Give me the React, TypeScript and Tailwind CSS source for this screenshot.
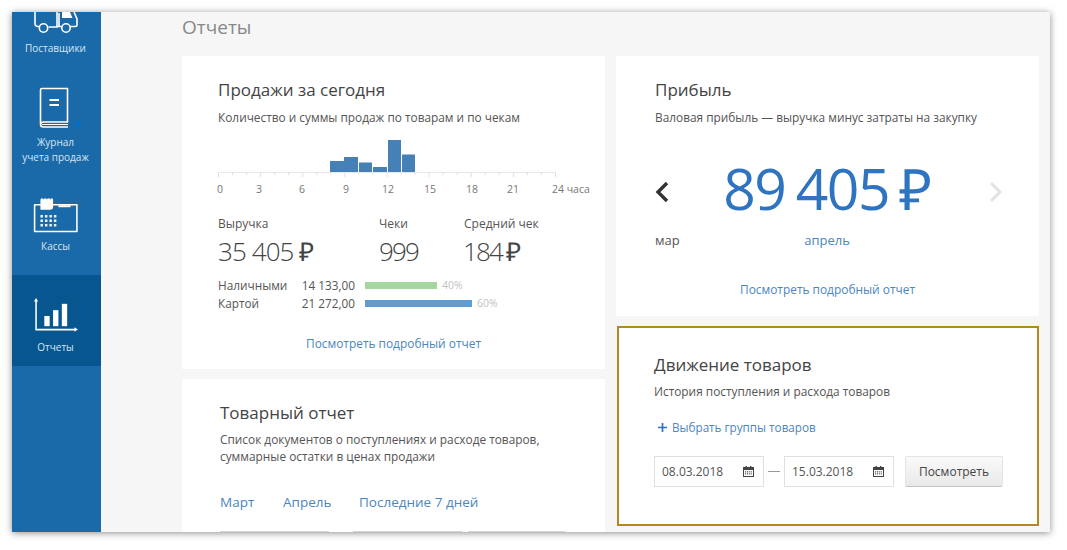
import React from "react";

const Truck = () => (
  <svg width="46" height="23" viewBox="0 0 46 23" fill="none" stroke="white" strokeWidth="1.6" className="block">
    <path d="M2 0V11.5Q2 14.5 5 14.5H6" />
    <path d="M15.5 15H24V0" />
    <path d="M26 15V1" />
    <circle cx="10.5" cy="16" r="4.2" />
    <circle cx="33" cy="16" r="4.2" />
    <path d="M24 14.5H28.5M37.5 14.5H42.5Q44 14.5 44 13V7L41 0" />
    <path d="M29 0H37L39.5 6H29Z" fill="white" stroke="none" />
  </svg>
);
const Book = () => (
  <svg width="32" height="42" viewBox="0 0 32 42" fill="none" stroke="white" strokeWidth="1.6" className="mr-[3px] block">
    <path d="M2.5 36V3Q2.5 1.5 4 1.5H29.5V35H5.5Q2.5 35 2.5 37.5Q2.5 40 5.5 40H30" />
    <path d="M11.5 13H21" strokeWidth="2" />
    <path d="M11.5 18H21" strokeWidth="2" />
    <path d="M4 37.5H30" strokeWidth="1" />
  </svg>
);
const Register = () => (
  <svg width="46" height="36" viewBox="0 0 46 37" fill="none" className="block">
    <path d="M1 8H44.5V35.5H1Z" stroke="white" strokeWidth="1.6" strokeLinejoin="round" />
    <path d="M7 2.5Q8.5 0 10.2 2.5Q11.9 0 13.6 2.5Q15.3 0 17 2.5Q18.7 0 20 2.5V10.5Q20 13 17 13H7Z" fill="white" />
    <path d="M25.5 9.5H38" stroke="white" strokeWidth="2" />
    {[0, 1, 2, 3].map((c) =>
      [0, 1, 2].map((r) => <rect key={c + "-" + r} x={7 + c * 4.6} y={18.5 + r * 4.6} width="2.6" height="2.6" fill="#e8f1f8" />)
    )}
  </svg>
);
const Bars = () => (
  <svg width="45" height="35" viewBox="0 0 46 36" fill="none" className="block">
    <path d="M3 2V32.5H43" stroke="white" strokeWidth="1.6" />
    <path d="M3 0L0.8 3.5H5.2Z" fill="white" />
    <path d="M46 32.5L42.5 30.2V34.8Z" fill="white" />
    <rect x="11.5" y="18.5" width="5.5" height="10.5" fill="white" />
    <rect x="20.5" y="12.5" width="5.5" height="16.5" fill="white" />
    <rect x="29.5" y="6" width="5.5" height="23" fill="white" />
  </svg>
);
const Cal = () => (
  <svg width="11" height="11" viewBox="0 0 11 11" className="block shrink-0">
    <rect x="0.5" y="1.5" width="10" height="9" fill="none" stroke="#444" />
    <rect x="0.5" y="1.5" width="10" height="2.5" fill="#444" />
    <rect x="2.5" y="0" width="1.4" height="2.5" fill="#444" />
    <rect x="7" y="0" width="1.4" height="2.5" fill="#444" />
    {[0, 1, 2, 3].map((c) =>
      [0, 1].map((r) => <rect key={c + "-" + r} x={2 + c * 1.9} y={5.3 + r * 2} width="1.1" height="1.1" fill="#444" />)
    )}
  </svg>
);

const bars: [number, number, number][] = [
  [112, 14, 11],
  [126, 14, 15],
  [141, 13, 9.5],
  [155, 14, 5],
  [170, 13, 32],
  [184, 13, 17.5],
];

const Chart = () => (
  <svg width="340" height="40" viewBox="0 0 340 40" className="block">
    {bars.map(([x, w, h]) => (
      <rect key={x} x={x} y={34 - h} width={w} height={h} fill="#4580b6" />
    ))}
    <path d="M0.5 34.5H338" stroke="#e6e9eb" strokeWidth="1" />
    {Array.from({ length: 25 }, (_, i) => (
      <path key={i} d={`M${0.5 + i * 14.04} 34.5V${i % 3 === 0 ? 39 : 37}`} stroke="#dde0e3" strokeWidth="1" />
    ))}
  </svg>
);

const ticks: [string, string][] = [
  ["0", "w-[42px]"],
  ["3", "w-[36px]"],
  ["6", "w-[50px]"],
  ["9", "w-[38px]"],
  ["12", "w-[46px]"],
  ["15", "w-[38px]"],
  ["18", "w-[46px]"],
  ["21", "w-[36px]"],
];

const Side = ({ icon, label, active }: { icon: React.ReactNode; label: React.ReactNode; active?: boolean }) => (
  <div className={active ? "flex h-[91px] flex-col items-center bg-[#07568f] pr-[2px] pt-[23px]" : "flex flex-col items-center pr-[2px]"}>
    {icon}
    <div className={(active ? "mt-[7px]" : "mt-[6px]") + " text-center text-[10px] leading-[15px] text-[#d6e6f3]"}>{label}</div>
  </div>
);

const link = "text-[11.9px] leading-[16px] text-[#4a86c2] text-center";
const title = "text-[17px] leading-[20px] text-[#444]";
const sub = "text-[11.85px] leading-[17px] text-[#555]";
const big = "mt-[4px] text-[26px] font-light leading-[30px] text-[#444] whitespace-nowrap";

export default function App() {
  return (
    <div className="h-[550px] w-[1067px] overflow-hidden bg-white p-3 font-['Open_Sans',sans-serif]">
      <div className="flex h-[520px] w-[1038px] overflow-hidden bg-[#f6f6f6] shadow-[0_1px_7px_rgba(0,0,0,0.45)]">
        <div className="flex w-[89px] shrink-0 flex-col bg-[#1a69a9]">
          <div className="flex flex-col items-center pr-[2px]">
            <Truck />
            <div className="mt-[6px] text-[10px] leading-[15px] text-[#d6e6f3]">Поставщики</div>
          </div>
          <div className="mt-[31px]">
            <Side icon={<Book />} label={<>Журнал<br />учета продаж</>} />
          </div>
          <div className="mt-[32px]">
            <Side icon={<Register />} label="Кассы" />
          </div>
          <div className="mt-[21px]">
            <Side active icon={<Bars />} label="Отчеты" />
          </div>
        </div>
        <div className="flex-1 pl-[81px]">
          <div className="h-[44px] pt-[1px] text-[19px] leading-[28px] text-[#888]">Отчеты</div>
          <div className="flex gap-[11px]">
            <div className="flex w-[423px] flex-col gap-[10px]">
              <div className="h-[313px] bg-white pl-[36px] pt-[24px]">
                <div className={title}>Продажи за сегодня</div>
                <div className={"mt-[9px] " + sub}>Количество и суммы продаж по товарам и по чекам</div>
                <div className="mt-[12px]"><Chart /></div>
                <div className="-ml-[19px] mt-[4px] flex text-[10.5px] leading-[14px] text-[#777]">
                  {ticks.map(([t, w]) => (
                    <div key={t} className={w + " text-center"}>{t}</div>
                  ))}
                  <div className="whitespace-nowrap pl-[21px]">24 часа</div>
                </div>
                <div className="mt-[20px] flex text-[#555]">
                  <div className="w-[161px]">
                    <div className="text-[12px] leading-[16px]">Выручка</div>
                    <div className={big + " tracking-[-0.9px]"}>35 405 ₽</div>
                  </div>
                  <div className="w-[85px]">
                    <div className="text-[12px] leading-[16px]">Чеки</div>
                    <div className={big + " tracking-[-1.8px]"}>999</div>
                  </div>
                  <div>
                    <div className="text-[12px] leading-[16px]">Средний чек</div>
                    <div className={"-ml-[1px] tracking-[-1.8px] [word-spacing:-1px] " + big}>184 ₽</div>
                  </div>
                </div>
                <div className="mt-[10px] text-[11.8px] leading-[18px] text-[#555]">
                  <div className="flex items-center">
                    <div className="w-[80px]">Наличными</div>
                    <div className="w-[57px] whitespace-nowrap text-right">14 133,00</div>
                    <div className="ml-[10px] h-[7px] w-[72px] bg-[#a5d6a0]" />
                    <div className="ml-[5px] text-[10.5px] text-[#c2c2c2]">40%</div>
                  </div>
                  <div className="flex items-center">
                    <div className="w-[80px]">Картой</div>
                    <div className="w-[57px] whitespace-nowrap text-right">21 272,00</div>
                    <div className="ml-[10px] h-[7px] w-[107px] bg-[#609cd0]" />
                    <div className="ml-[5px] text-[10.5px] text-[#c2c2c2]">60%</div>
                  </div>
                </div>
                <div className={"-ml-[36px] mt-[23px] " + link}>Посмотреть подробный отчет</div>
              </div>
              <div className="h-[160px] bg-white pl-[38px] pt-[24px]">
                <div className={title}>Товарный отчет</div>
                <div className={"mt-[8px] " + sub}>
                  Список документов о поступлениях и расходе товаров,<br />суммарные остатки в ценах продажи
                </div>
                <div className="mt-[27px] flex text-[13.5px] leading-[20px] text-[#4a86c2]">
                  <div className="w-[63px]">Март</div>
                  <div className="w-[76px]">Апрель</div>
                  <div>Последние 7 дней</div>
                </div>
                <div className="mt-[19px] flex">
                  <div className="h-[1px] w-[109px] bg-[#d4d4d4]" />
                  <div className="ml-[24px] h-[1px] w-[109px] bg-[#d4d4d4]" />
                  <div className="ml-[6px] h-[1px] w-[97px] bg-[#d4d4d4]" />
                </div>
              </div>
            </div>
            <div className="flex w-[423px] flex-col gap-[10px]">
              <div className="flex h-[260px] flex-col bg-white pl-[39px] pt-[24px]">
                <div className={title}>Прибыль</div>
                <div className={"mt-[9px] " + sub}>Валовая прибыль — выручка минус затраты на закупку</div>
                <div className="mt-[20px] flex h-[84px] items-center pr-[36px]">
                  <svg width="14" height="22" viewBox="0 0 14 22" fill="none" className="mt-[8px] shrink-0">
                    <path d="M12 2L3 11L12 20" stroke="#333" strokeWidth="3.4" />
                  </svg>
                  <div className="flex-1 whitespace-nowrap pr-[4px] text-center text-[57px] leading-[70px] tracking-[-1.5px] text-[#2f74c0] [word-spacing:-3px]">89 405 ₽</div>
                  <svg width="14" height="22" viewBox="0 0 14 22" fill="none" className="mt-[8px] shrink-0">
                    <path d="M2 2L11 11L2 20" stroke="#e2e2e2" strokeWidth="3" />
                  </svg>
                </div>
                <div className="mt-[1px] flex pr-[36px] text-[13px] leading-[18px]">
                  <div className="w-[40px] text-[#555]">мар</div>
                  <div className="w-[264px] text-center text-[#4a86c2]">апрель</div>
                </div>
                <div className={"-ml-[39px] mt-[32px] " + link}>Посмотреть подробный отчет</div>
              </div>
              <div className="ml-[1px] h-[200px] w-[422px] border-2 border-[#b08a1e] bg-white pl-[35px] pt-[27px]">
                <div className={title}>Движение товаров</div>
                <div className={"mt-[8px] " + sub}>История поступления и расхода товаров</div>
                <div className="mt-[18px] flex items-center pl-[4px] text-[11.7px] leading-[18px] text-[#4a86c2]">
                  <svg width="9" height="9" viewBox="0 0 9 9" className="mr-[5px] shrink-0">
                    <path d="M4.5 0V9M0 4.5H9" stroke="#2f74c0" strokeWidth="1.7" />
                  </svg>
                  Выбрать группы товаров
                </div>
                <div className="mt-[20px] flex items-center text-[12px] text-[#555]">
                  <div className="flex h-[31px] w-[110px] items-center justify-between border border-[#e0e0e0] pl-[7px] pr-[9px]">
                    08.03.2018<Cal />
                  </div>
                  <div className="mx-[4px] h-[1px] w-[12px] bg-[#999]" />
                  <div className="flex h-[31px] w-[110px] items-center justify-between border border-[#e0e0e0] pl-[7px] pr-[9px]">
                    15.03.2018<Cal />
                  </div>
                  <div className="ml-[11px] flex h-[31px] w-[98px] items-center justify-center rounded-[2px] border border-[#e4e4e4] border-b-[#c4c4c4] bg-gradient-to-b from-[#fafafa] to-[#e9e9e9] text-[#444]">
                    Посмотреть
                  </div>
                </div>
              </div>
            </div>
          </div>
        </div>
      </div>
    </div>
  );
}
